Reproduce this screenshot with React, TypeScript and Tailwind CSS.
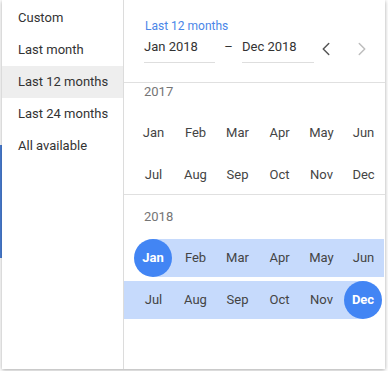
import { ChevronLeft, ChevronRight } from "lucide-react";

const MONTHS = ["Jan", "Feb", "Mar", "Apr", "May", "Jun", "Jul", "Aug", "Sep", "Oct", "Nov", "Dec"];
const PRESETS = ["Custom", "Last month", "Last 12 months", "Last 24 months", "All available"];

// selected range, as index into year*12+month
const RANGE_START = 2018 * 12 + 0;
const RANGE_END = 2018 * 12 + 11;

function MonthCell({ year, month }: { year: number; month: number }) {
  const idx = year * 12 + month;
  const isStart = idx === RANGE_START;
  const isEnd = idx === RANGE_END;
  const inRange = idx >= RANGE_START && idx <= RANGE_END;

  let band = "";
  if (isStart && !isEnd) band = "bg-[linear-gradient(to_right,transparent_50%,#c6dafc_50%)]";
  else if (isEnd && !isStart) band = "bg-[linear-gradient(to_right,#c6dafc_50%,transparent_50%)]";
  else if (inRange) band = "bg-[#c6dafc]";

  return (
    <div className={`w-[42px] h-[38px] flex items-center justify-center ${band}`}>
      {isStart || isEnd ? (
        <div className="w-[38px] h-[38px] rounded-full bg-[#4285f4] text-white font-bold flex items-center justify-center">
          {MONTHS[month]}
        </div>
      ) : (
        <span className="pl-[1px]">{MONTHS[month]}</span>
      )}
    </div>
  );
}

function YearSection({ year, first }: { year: number; first?: boolean }) {
  const rows = [0, 6];
  return (
    <div className={first ? "-mt-[13px]" : "border-t border-[#e0e0e0]"}>
      <div className="h-[44px] pl-[20px] pt-[14px] leading-[16px] text-[#757575]">{year}</div>
      <div className="flex flex-col gap-[4px]">
        {rows.map((r) => {
          const firstIdx = year * 12 + r;
          const padBlue = firstIdx > RANGE_START && firstIdx <= RANGE_END;
          return (
            <div key={r} className="flex text-[#444]">
              <div className={`w-[8px] ${padBlue ? "bg-[#c6dafc]" : ""}`} />
              {MONTHS.slice(r, r + 6).map((_, i) => (
                <MonthCell key={i} year={year} month={r + i} />
              ))}
            </div>
          );
        })}
      </div>
    </div>
  );
}

export default function App() {
  return (
    <div className="relative w-[388px] h-[371px] bg-white overflow-hidden text-[13px] font-['Roboto',sans-serif]">
      {/* page underneath the popup */}
      <div className="pt-[145px]">
        <div className="w-[2px] h-[113px] bg-[#4a7fd6]" />
      </div>

      <div className="absolute left-[2px] top-0 w-[383px] h-[369px] bg-white flex shadow-[0_1px_4px_rgba(0,0,0,0.35)]">
        <div className="w-[122px] pt-[2px] border-r border-[#dcdcdc] text-[#333]">
          {PRESETS.map((p) => (
            <div
              key={p}
              className={`h-[32px] pl-[16px] flex items-center ${p === "Last 12 months" ? "bg-[#eeeeee]" : ""}`}
            >
              {p}
            </div>
          ))}
        </div>

        <div className="flex-1 flex flex-col">
          <div className="h-[83px] border-b border-[#e0e0e0] pl-[20px]">
            <div className="mt-[18px] pl-[1px] text-[12px] leading-[16px] text-[#4a86e8]">Last 12 months</div>
            <div className="mt-[4px] flex items-start text-[#333]">
              <div className="w-[71px] h-[25px] leading-[18px] border-b border-[#dedede]">Jan 2018</div>
              <div className="w-[27px] leading-[18px] text-center">–</div>
              <div className="w-[72px] h-[25px] leading-[18px] border-b border-[#dedede]">Dec 2018</div>
              <div className="ml-[1px] w-[22px] h-[22px] flex items-center justify-center text-[#555]">
                <ChevronLeft size={22} strokeWidth={1.6} />
              </div>
              <div className="ml-[14px] w-[22px] h-[22px] flex items-center justify-center text-[#bdbdbd]">
                <ChevronRight size={22} strokeWidth={1.6} />
              </div>
            </div>
          </div>

          <div className="flex-1 overflow-hidden">
            <YearSection year={2017} first />
            <YearSection year={2018} />
          </div>
        </div>
      </div>
    </div>
  );
}
